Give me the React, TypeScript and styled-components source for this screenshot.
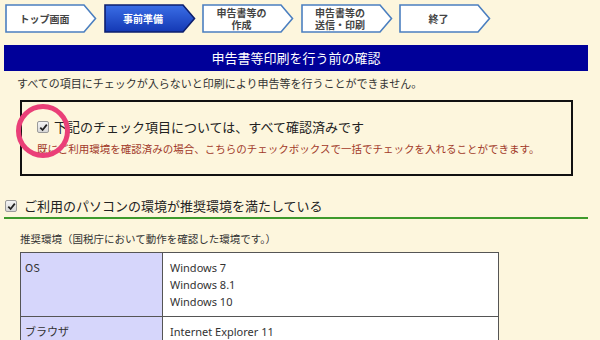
import React from "react";
import styled, { createGlobalStyle } from "styled-components";

const GlobalStyle = createGlobalStyle`
  html, body {
    margin: 0;
    padding: 0;
    background: #fdf6dd;
  }
  body {
    font-family: "Noto Sans CJK JP", "Noto Sans", sans-serif;
    color: #333;
  }
`;

const steps = [
  { label: "トップ画面", active: false },
  { label: "事前準備", active: true },
  { label: "申告書等の\n作成", active: false },
  { label: "申告書等の\n送信・印刷", active: false },
  { label: "終了", active: false },
];

const StepArrow: React.FC<{ active: boolean }> = ({ active }) => (
  <svg width="92" height="29" viewBox="0 0 92 29">
    <defs>
      <linearGradient id="stepBlue" x1="0" y1="0" x2="0" y2="1">
        <stop offset="0" stopColor="#3a6ee6" />
        <stop offset="1" stopColor="#1438b4" />
      </linearGradient>
    </defs>
    <polygon
      points="1,1 79,1 90.5,14.5 79,28 1,28"
      fill={active ? "url(#stepBlue)" : "#ffffff"}
      stroke={active ? "#0d1f6e" : "#4b7fc0"}
      strokeWidth="1.6"
    />
  </svg>
);

const Check: React.FC<{ checked?: boolean }> = ({ checked }) => (
  <CheckBox>
    {checked && (
      <svg width="9" height="9" viewBox="0 0 9 9">
        <path d="M1.3 4.6 L3.6 7 L7.8 1.6" fill="none" stroke="#222" strokeWidth="1.8" />
      </svg>
    )}
  </CheckBox>
);

const App: React.FC = () => {
  return (
    <>
      <GlobalStyle />
      <Page>
        <StepBar>
          {steps.map((s) => (
            <Step key={s.label}>
              <StepArrow active={s.active} />
              <StepLabel $active={s.active}>{s.label}</StepLabel>
            </Step>
          ))}
        </StepBar>

        <TitleBar>申告書等印刷を行う前の確認</TitleBar>
        <Notice>すべての項目にチェックが入らないと印刷により申告等を行うことができません。</Notice>

        <ConfirmBox>
          <ConfirmRow>
            <Check checked />
            <ConfirmText>下記のチェック項目については、すべて確認済みです</ConfirmText>
          </ConfirmRow>
          <ConfirmNote>
            既にご利用環境を確認済みの場合、こちらのチェックボックスで一括でチェックを入れることができます。
          </ConfirmNote>
          <Highlight />
        </ConfirmBox>

        <SectionHead>
          <Check checked />
          <SectionTitle>ご利用のパソコンの環境が推奨環境を満たしている</SectionTitle>
        </SectionHead>
        <SectionBody>
          <Lead>推奨環境（国税庁において動作を確認した環境です。）</Lead>
          <EnvTable>
            <colgroup>
              <col style={{ width: 142 }} />
              <col />
            </colgroup>
            <tbody>
              <tr>
                <Th>OS</Th>
                <Td>
                  Windows 7
                  <br />
                  Windows 8.1
                  <br />
                  Windows 10
                </Td>
              </tr>
              <tr>
                <Th>ブラウザ</Th>
                <Td>Internet Explorer 11</Td>
              </tr>
            </tbody>
          </EnvTable>
        </SectionBody>
      </Page>
    </>
  );
};

const Page = styled.div`
  width: 600px;
  height: 340px;
  overflow: hidden;
  padding: 4px 0 0 4px;
  box-sizing: border-box;
`;

const StepBar = styled.div`
  display: flex;
  gap: 6.5px;
  padding-left: 1px;
  height: 30px;
`;

const Step = styled.div`
  position: relative;
  width: 92px;
  height: 29px;
`;

const StepLabel = styled.div<{ $active: boolean }>`
  position: absolute;
  left: 0;
  top: 0;
  width: 79px;
  height: 29px;
  display: flex;
  align-items: center;
  justify-content: center;
  text-align: center;
  white-space: pre-line;
  font-size: 10px;
  line-height: 12px;
  font-weight: 700;
  color: ${(p) => (p.$active ? "#ffffff" : "#444")};
`;

const TitleBar = styled.div`
  margin-top: 11px;
  width: 584px;
  height: 26px;
  background: #000099;
  color: #fff;
  font-size: 13px;
  line-height: 26px;
  text-align: center;
`;

const Notice = styled.div`
  margin: 3px 0 0 13px;
  font-size: 11px;
  line-height: 18px;
  color: #333;
`;

const ConfirmBox = styled.div`
  position: relative;
  margin: 8px 0 0 16px;
  width: 553px;
  height: 76px;
  border: 2px solid #111;
  padding: 15px 0 0 15px;
  box-sizing: border-box;
`;

const ConfirmRow = styled.div`
  display: flex;
  align-items: center;
  gap: 5px;
`;

const ConfirmText = styled.span`
  font-size: 13px;
  line-height: 20px;
  color: #222;
`;

const ConfirmNote = styled.div`
  margin-top: 4px;
  font-size: 10.5px;
  line-height: 16px;
  color: #a23a2a;
`;

const Highlight = styled.div`
  position: absolute;
  left: -6px;
  top: 2px;
  width: 54px;
  height: 54px;
  box-sizing: border-box;
  border: 5px solid #ea3f78;
  border-radius: 50%;
`;

const CheckBox = styled.span`
  display: inline-flex;
  align-items: center;
  justify-content: center;
  width: 10px;
  height: 10px;
  border: 1px solid #9a9a9a;
  border-radius: 2px;
  background: linear-gradient(#f4f4f4, #d8d8d8);
  flex-shrink: 0;
`;

const SectionHead = styled.div`
  margin-top: 20px;
  display: flex;
  align-items: center;
  gap: 7px;
  padding: 0 0 1px 1px;
  border-bottom: 2px solid #3e9a2c;
  width: 584px;
  box-sizing: border-box;
`;

const SectionTitle = styled.span`
  font-size: 13px;
  line-height: 20px;
  color: #222;
`;

const SectionBody = styled.div`
  padding-left: 16px;
`;

const Lead = styled.div`
  margin-top: 12px;
  font-size: 10.5px;
  line-height: 16px;
  color: #333;
`;

const EnvTable = styled.table`
  margin-top: 5px;
  width: 479px;
  table-layout: fixed;
  border-collapse: collapse;
  background: #fff;
  border: 1px solid #555;
  font-size: 11px;
  color: #333;

  td,
  th {
    border: 1px solid #555;
    vertical-align: top;
    text-align: left;
    font-weight: 400;
  }
`;

const Th = styled.th`
  background: #d6d6fb;
  padding: 6px 4px;
  line-height: 17px;
`;

const Td = styled.td`
  padding: 6px 7px;
  line-height: 17px;
  font-family: "Noto Sans", sans-serif;
`;

export default App;
